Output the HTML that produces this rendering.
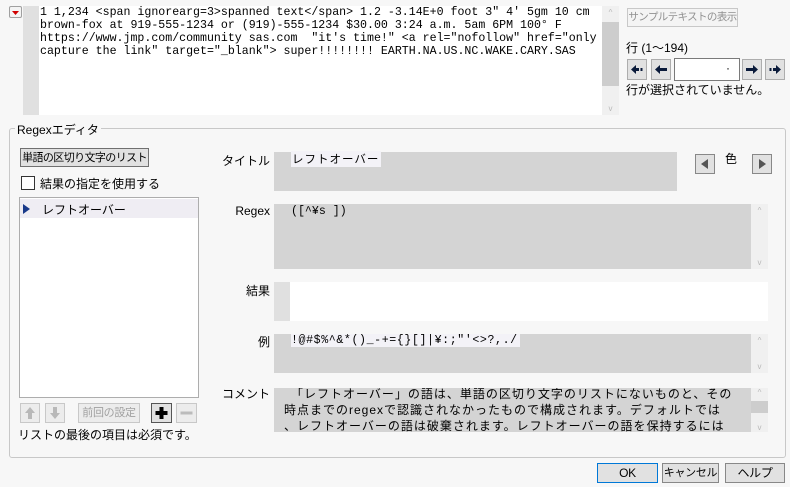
<!DOCTYPE html>
<html><head><meta charset="utf-8"><style>
*{box-sizing:border-box;margin:0;padding:0}
body{width:790px;height:487px;background:#f7f7f7;font-family:"Liberation Sans","Noto Sans CJK JP",sans-serif;font-size:12px;color:#000;position:relative;overflow:hidden}
.a{position:absolute;white-space:nowrap}
.mono{font-family:"Liberation Mono","Noto Sans CJK JP",monospace;font-size:11.6px;line-height:13px;white-space:pre}
.btn{position:absolute;background:#e1e1e1;border:1px solid #adadad;font-size:12px;text-align:center;line-height:18px;white-space:nowrap;overflow:hidden;letter-spacing:-0.3px}
.dis{color:#a0a0a0;border-color:#c8c8c8;background:#ececec}
.lbl{position:absolute;font-size:12px;text-align:right;width:80px;white-space:nowrap}
.gray{position:absolute;background:#d4d4d4}
.sb{position:absolute;background:#f0f0f0;color:#b8b8b8;font-size:8px;text-align:center}
</style></head><body>
<div class="a" style="left:9px;top:6px;width:13px;height:12px;border:1px solid #a0a0a0;background:#f4f4f4;border-radius:2px"><svg width="11" height="10"><path d="M2 3 L9 3 L5.5 7 Z" fill="#d00000"/></svg></div>
<div class="a" style="left:23px;top:6px;width:16px;height:109px;background:#e0e0e0"></div>
<div class="a" style="left:39px;top:6px;width:563px;height:109px;background:#fff"></div>
<div class="a mono" style="left:40px;top:6px">1 1,234 &lt;span ignorearg=3&gt;spanned text&lt;/span&gt; 1.2 -3.14E+0 foot 3" 4' 5gm 10 cm
brown-fox at 919-555-1234 or (919)-555-1234 $30.00 3:24 a.m. 5am 6PM 100° F
https://www.jmp.com/community sas.com  "it's time!" &lt;a rel="nofollow" href="only
capture the link" target="_blank"&gt; super!!!!!!!! EARTH.NA.US.NC.WAKE.CARY.SAS</div>
<div class="sb" style="left:602px;top:6px;width:17px;height:109px"><div style="position:absolute;top:16px;left:0;width:17px;height:64px;background:#cdcdcd"></div><div style="position:absolute;top:2px;width:17px">^</div><div style="position:absolute;bottom:2px;width:17px">v</div></div>
<div class="btn dis" style="left:627px;top:8px;width:111px;height:19px;background:#f4f4f4;color:#909090;font-size:10.5px;letter-spacing:-0.6px;line-height:17px">サンプルテキストの表示</div>
<div class="a" style="left:626px;top:39px">行 (1〜194)</div>
<div class="btn" style="left:627px;top:59px;width:20px;height:21px"><svg width="18" height="19"><path d="M3 9.5 L8 5 L8 14 Z M8 8 H11 V11 H8 Z M12.5 8 H14.5 V11 H12.5 Z" fill="#0a1a3a"/></svg></div>
<div class="btn" style="left:651px;top:59px;width:20px;height:21px"><svg width="18" height="19"><path d="M3 9.5 L8 5 L8 14 Z M8 8 H15 V11 H8 Z" fill="#0a1a3a"/></svg></div>
<div class="a" style="left:674px;top:58px;width:66px;height:23px;background:#fff;border:1px solid #7a7a7a"><span style="position:absolute;right:9px;top:2px">·</span></div>
<div class="btn" style="left:742px;top:59px;width:20px;height:21px"><svg width="18" height="19"><path d="M15 9.5 L10 5 L10 14 Z M3 8 H10 V11 H3 Z" fill="#0a1a3a"/></svg></div>
<div class="btn" style="left:765px;top:59px;width:20px;height:21px"><svg width="18" height="19"><path d="M15 9.5 L10 5 L10 14 Z M7 8 H10 V11 H7 Z M3.5 8 H5.5 V11 H3.5 Z" fill="#0a1a3a"/></svg></div>
<div class="a" style="left:626px;top:81px">行が選択されていません。</div>
<div class="a" style="left:9px;top:128px;width:777px;height:330px;border:1px solid #c8c8c8;border-radius:3px"></div>
<div class="a" style="left:15px;top:121px;background:#f7f7f7;padding:0 2px">Regexエディタ</div>
<div class="btn" style="left:20px;top:148px;width:129px;height:19px;border-color:#707070;font-size:11px;letter-spacing:-0.6px">単語の区切り文字のリスト</div>
<div class="a" style="left:21px;top:176px;width:14px;height:14px;border:1px solid #333;background:#fff"></div>
<div class="a" style="left:40px;top:175px">結果の指定を使用する</div>
<div class="a" style="left:19px;top:197px;width:180px;height:201px;background:#fff;border:1px solid #adadad"></div>
<div class="a" style="left:20px;top:199px;width:178px;height:19px;background:#efedf3"></div>
<svg class="a" style="left:22px;top:203px" width="10" height="12"><path d="M1 1 L8 6 L1 11 Z" fill="#1a3a8a"/></svg>
<div class="a" style="left:42px;top:201px">レフトオーバー</div>
<div class="btn dis" style="left:20px;top:403px;width:20px;height:20px"><svg width="18" height="18"><path d="M9 3 L14 9 H11 V15 H7 V9 H4 Z" fill="#b8b8b8"/></svg></div>
<div class="btn dis" style="left:45px;top:403px;width:20px;height:20px"><svg width="18" height="18"><path d="M9 15 L14 9 H11 V3 H7 V9 H4 Z" fill="#b8b8b8"/></svg></div>
<div class="btn dis" style="left:78px;top:403px;width:62px;height:20px;font-size:11px">前回の設定</div>
<div class="btn" style="left:151px;top:403px;width:21px;height:20px;border-color:#555"><svg width="19" height="18"><path d="M7.5 3 H11.5 V7 H15.5 V11 H11.5 V15 H7.5 V11 H3.5 V7 H7.5 Z" fill="#000"/></svg></div>
<div class="btn dis" style="left:176px;top:403px;width:21px;height:20px"><svg width="19" height="18"><path d="M3.5 7.5 H15.5 V10.5 H3.5 Z" fill="#bbb"/></svg></div>
<div class="a" style="left:18px;top:426px">リストの最後の項目は必須です。</div>
<div class="lbl" style="left:190px;top:152px">タイトル</div>
<div class="lbl" style="left:190px;top:204px">Regex</div>
<div class="lbl" style="left:190px;top:282px">結果</div>
<div class="lbl" style="left:190px;top:333px">例</div>
<div class="lbl" style="left:190px;top:385px">コメント</div>
<div class="gray" style="left:274px;top:152px;width:403px;height:39px"></div>
<div class="a" style="left:291px;top:151px;background:#f3f2f7;padding:0 2px 0 1px;font-size:11.5px;letter-spacing:1px">レフトオーバー</div>
<div class="btn" style="left:695px;top:154px;width:20px;height:20px;border-color:#888"><svg width="18" height="18"><path d="M12 4 L5 9 L12 14 Z" fill="#555"/></svg></div>
<div class="a" style="left:725px;top:150px">色</div>
<div class="btn" style="left:752px;top:154px;width:20px;height:20px;border-color:#888"><svg width="18" height="18"><path d="M6 4 L13 9 L6 14 Z" fill="#555"/></svg></div>
<div class="gray" style="left:274px;top:204px;width:477px;height:65px"></div>
<div class="sb" style="left:751px;top:204px;width:17px;height:65px"><div style="position:absolute;top:2px;width:17px">^</div><div style="position:absolute;bottom:2px;width:17px">v</div></div>
<div class="a mono" style="left:291px;top:205px">([^¥s ])</div>
<div class="a" style="left:274px;top:282px;width:16px;height:39px;background:#e0e0e0"></div>
<div class="a" style="left:290px;top:282px;width:478px;height:39px;background:#fff"></div>
<div class="gray" style="left:274px;top:334px;width:477px;height:39px"></div>
<div class="sb" style="left:751px;top:334px;width:17px;height:39px"><div style="position:absolute;top:2px;width:17px">^</div><div style="position:absolute;bottom:2px;width:17px">v</div></div>
<div class="a mono" style="left:291px;top:334px;background:#f3f2f7;padding-right:2px;letter-spacing:0.6px">!@#$%^&amp;*()_-+={}[]|¥:;"'&lt;&gt;?,./</div>
<div class="gray" style="left:274px;top:388px;width:477px;height:44px;overflow:hidden"><div style="position:absolute;left:10px;top:-2px;width:470px;font-size:12px;line-height:16px;letter-spacing:1px;white-space:nowrap">　「レフトオーバー」の語は、単語の区切り文字のリストにないものと、その<br>時点までのregexで認識されなかったもので構成されます。デフォルトでは<br>、レフトオーバーの語は破棄されます。レフトオーバーの語を保持するには<br>、結果を指定します。</div></div>
<div class="sb" style="left:751px;top:388px;width:17px;height:44px"><div style="position:absolute;top:13px;width:17px;height:12px;background:#cdcdcd"></div><div style="position:absolute;top:0;width:17px">^</div><div style="position:absolute;bottom:0;width:17px">v</div></div>
<div class="btn" style="left:597px;top:463px;width:61px;height:20px;border:1px solid #0078d7">OK</div>
<div class="btn" style="left:662px;top:463px;width:57px;height:20px;border-color:#888;font-size:11px">キャンセル</div>
<div class="btn" style="left:725px;top:463px;width:60px;height:20px;border-color:#888">ヘルプ</div>
</body></html>
